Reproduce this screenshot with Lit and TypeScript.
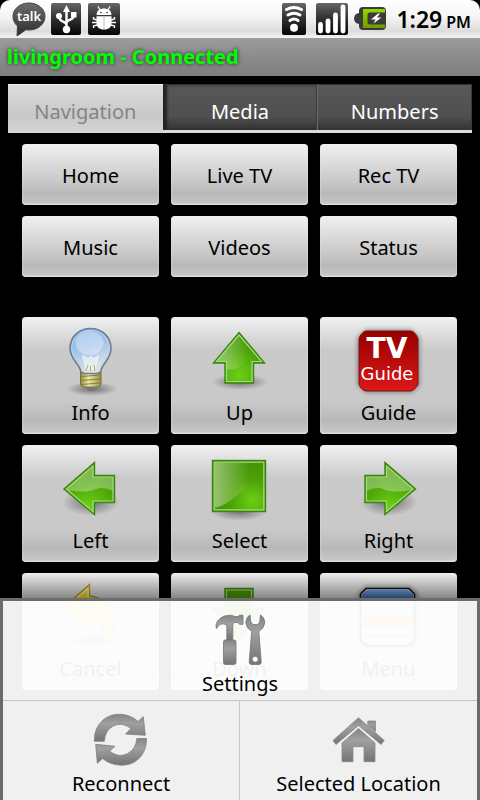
import { LitElement, html, css, svg, TemplateResult } from "lit";
import { customElement, state } from "lit/decorators.js";

type Key = { label: string; icon: TemplateResult };

const talkIcon = html`<svg class="glyph" width="36" height="38" viewBox="0 0 36 38" aria-hidden="true">
  <path d="M19 3C28 3 35 9 35 16.500S28 30 19 30L16 29.700 7 36 7.500 26C4.500 23.500 3 20 3 16.500 3 9 10 3 19 3Z" fill="url(#bubble)" stroke="#444" />
  <text x="19" y="21" class="talk" text-anchor="middle">talk</text>
</svg>`;

const usbIcon = html`<svg class="glyph" width="30" height="32" viewBox="0 0 30 32" aria-hidden="true">
  <rect width="30" height="32" rx="2" fill="url(#dark)" />
  <path d="M15.500 8V25M15.500 22C15.500 18 8 20 8 13M15.500 20C15.500 16 23 18 23 12" fill="none" stroke="#fff" stroke-width="2.400" />
  <path d="M15.500 2L19 9H12Z" fill="#fff" />
  <circle cx="8" cy="13" r="3" fill="#fff" />
  <rect x="20" y="9" width="5.500" height="5.500" fill="#fff" />
  <circle cx="15.500" cy="26.500" r="3.700" fill="#fff" />
</svg>`;

const bugIcon = html`<svg class="glyph" width="32" height="32" viewBox="0 0 32 32" aria-hidden="true">
  <rect width="32" height="32" rx="2" fill="url(#dark)" />
  <path d="M8.500 12C8.500 7.500 12 5.500 16 5.500S23.500 7.500 23.500 12Z" fill="#fff" />
  <path d="M8.500 13.200H23.500V20C23.500 24 21 26.500 16 26.500S8.500 24 8.500 20Z" fill="#fff" />
  <path d="M12 7L10 3.500M20 7L22 3.500M9 17L5.500 16V14M9 19.500H4M9 22L5.500 23V25M23 17L26.500 16V14M23 19.500H28M23 22L26.500 23V25" fill="none" stroke="#fff" stroke-width="1.400" />
  <path d="M16 13.500V26.500" stroke="#bbb" />
  <circle cx="13" cy="9.500" r=".8" fill="#333" /><circle cx="19" cy="9.500" r=".8" fill="#333" />
</svg>`;

const wifiIcon = html`<svg class="glyph" width="24" height="32" viewBox="0 0 24 32" aria-hidden="true">
  <rect width="24" height="32" rx="2" fill="url(#dark)" />
  <path d="M4.500 6.500Q12 2.500 19.500 6.500M6 12Q12 8.500 18 12M8 17.500Q12 14.500 16 17.500" fill="none" stroke="#fff" stroke-width="3" stroke-linecap="round" />
  <circle cx="12" cy="24.800" r="4" fill="#fff" />
</svg>`;

const signalIcon = html`<svg class="glyph" width="32" height="32" viewBox="0 0 32 32" aria-hidden="true">
  <rect width="32" height="32" rx="2" fill="url(#dark)" />
  <path d="M4.500 21.500V28M12 18V28M19.500 12V28M27 4V28" stroke="#fff" stroke-width="4.800" stroke-linecap="round" />
</svg>`;

const batteryIcon = html`<svg class="glyph" width="32" height="32" viewBox="0 0 32 32" aria-hidden="true">
  <path d="M9 4H28Q32 4 32 8V23Q32 27 28 27H9Q5 27 5 23V21L2 20Q0 18 0 15.500T2 11L5 10V8Q5 4 9 4Z" fill="#3a3a3a" />
  <path d="M9 6H31V25H9Z" fill="url(#charge)" />
  <path d="M16 9.500H32V21.500H16Q13.500 21.500 13.500 19V12Q13.500 9.500 16 9.500Z" fill="#3a3a3a" />
  <path d="M24 10.500L17 16.500H21.500L19.500 20.500 27.500 14.500H23L26 10.500Z" fill="#fff" />
</svg>`;

const padIcon = (body: TemplateResult) =>
  html`<svg class="pad-icon" width="72" height="72" viewBox="0 0 72 72" aria-hidden="true">${body}</svg>`;

const bulb = padIcon(svg`
  <ellipse cx="37" cy="64" rx="26" ry="7" fill="url(#shade)" />
  <path d="M25.500 46H46V59Q46 62 42 62H29.500Q25.500 62 25.500 59Z" fill="url(#brass)" stroke="#77733a" />
  <path d="M26 51.500L45.500 50M26 55.500L45.500 54M26 59.500L45 58" stroke="#85803e" fill="none" />
  <path d="M31 62H40L37.500 66H33.500Z" fill="#777" />
  <path d="M35.500 3.500C47 3.500 56 12 56 23.500 56 34 47.500 38 46 45.500Q45 48.500 41 48.500H30.500Q26.500 48.500 25.500 45.500C24 38 15 34 15 23.500 15 12 24 3.500 35.500 3.500Z" fill="url(#glass)" stroke="#747b8a" stroke-width="1.600" />
  <path d="M35.500 5.300C46 5.300 54.200 13 54.200 23.500 54.200 33 46 37 44.500 45M27 45C25.500 37 16.800 33 16.800 23.500 16.800 13 25 5.300 35.500 5.300" fill="none" stroke="#b7d3f3" />
  <ellipse cx="34.500" cy="18" rx="14" ry="12" fill="#fff" opacity=".35" />
  <path d="M31 45L27.500 30 33 33 36 31 39 33 43.500 30 40 45Z" fill="#fff" opacity=".5" />
  <path d="M32 46L27.500 31 33 34 36 32 39 34 43.500 31 39.500 46" fill="none" stroke="#eef4fa" />
  <path d="M31 46L33 40M40 46L39 40M35.500 46V41" stroke="#a7ad65" />`);

const upArrow = padIcon(svg`
  <ellipse cx="36" cy="57" rx="29" ry="8" fill="url(#shade)" />
  <path d="M35 7.500L60.500 38H49.500V58H21V38H9.500Z" fill="url(#green)" stroke="#3d8410" stroke-width="1.400" />
  <path d="M35 9.500L57 36Q46 34 38 40T23 44V36H13Z" fill="url(#sheen)" />
  <path d="M35 10L57.500 36.500H48V56.500H22.500V36.500H12.500Z" fill="none" stroke="#a2da7e" stroke-width="1.200" />`);

const leftBody = svg`
  <ellipse cx="36" cy="49" rx="29" ry="14" fill="url(#shade)" />
  <path d="M9 36L39.500 9.500V22.500H59.500V49.500H39.500V61.500Z" fill="url(#green)" stroke="#3d8410" stroke-width="1.400" />
  <path d="M12 36L38 13V24H58V38Q48 33 40 36.500T14 37.500Z" fill="#fff" opacity=".3" />
  <path d="M11.500 36L38 13V24H58V48H38V58.500Z" fill="none" stroke="#a2da7e" stroke-width="1.200" />`;

const guide = padIcon(svg`
  <path d="M13 4H58L67 12V60L59 68H13L4 60V12Z" fill="#000" class="soft" />
  <path d="M13 6H58Q60 6 62 8.500T65 14V59Q65 60 63 62.500T58 66H13Q11 66 8.500 63.500T6 58V14Q6 12 8.500 9T13 6Z" fill="url(#red)" stroke="#7c1212" />
  <text x="34" y="33" text-anchor="middle" class="tv">TV</text>
  <text x="34" y="55" text-anchor="middle" class="tv-guide">Guide</text>`);

const select = padIcon(svg`
  <ellipse cx="35" cy="58" rx="29" ry="10" fill="url(#shade)" />
  <rect x="8.500" y="7.500" width="53" height="51" fill="url(#greenbox)" stroke="#3d8410" stroke-width="1.400" />
  <path d="M11 10H60V30Q42 34 32 43T11 55Z" fill="url(#sheen)" />
  <rect x="10.200" y="9.200" width="49.600" height="47.600" fill="none" stroke="#a2da7e" stroke-width="1.200" />`);

const cancel = padIcon(svg`
  <ellipse cx="38" cy="60" rx="26" ry="6" fill="url(#shade)" />
  <path d="M9 26L34.500 3.500V15Q59 18 59 42 59 57 45.500 64.500 52 50 46 42 42 37 34.500 37V49Z" fill="#ecd23c" stroke="#b1932a" stroke-width="1.400" />
  <path d="M12 26L33 7.500V17Q57 20 57 42" fill="none" stroke="#fbee9a" stroke-width="1.200" />`);

const down = padIcon(svg`
  <path d="M21 7.500H49V27.500H60.500L35 58 9.500 27.500H21Z" fill="url(#green)" stroke="#3d8410" stroke-width="1.400" />
  <path d="M22.500 9H47.500V29H57.500L35 55.500 12.500 29H22.500Z" fill="none" stroke="#a2da7e" stroke-width="1.200" />`);

const menuIcon = padIcon(svg`
  <path d="M13 5H57L65 12V60L58 67H12L5 60V12Z" class="soft" />
  <path d="M13 7.500H56L61.500 13V59L56 64.500H13L7.500 59V13Z" fill="#ddd" stroke="#111" stroke-width="1.600" />
  <path d="M13.500 8.500H55.500L60.500 13.500V18H8.500V13.500Z" fill="url(#blue)" />
  <rect x="8.500" y="36" width="52" height="9.500" fill="#f3b93c" />
  <path d="M8 18H61M8 27H61M8 36H61M8 46H61M8 55H61" stroke="#777" />`);

const menuGlyph = (body: TemplateResult) =>
  html`<svg class="menu-icon" width="56" height="56" viewBox="0 0 56 56" aria-hidden="true">${body}</svg>`;

const toolsIcon = menuGlyph(svg`
  <g fill="url(#steel)" stroke="#747474" stroke-width=".8">
    <path d="M4.500 16.500Q2.500 11 8 6.500 12 3 19 3.200L23 4.500 26 4.500 27.500 3.200H31V12.300H27.500L26 10.500H22L20.800 12V28H14.800V13Q8 9.500 4.500 16.500Z" />
    <path d="M13 28H22.500Q24 28 24 30V50.500Q24 52.500 22 52.500H13.500Q11.500 52.500 11.500 50.500V30Q11.500 28 13 28Z" />
    <path fill-rule="evenodd" d="M38 2.800Q34 5.500 33.800 10.500 34 16 39.700 19.500L37.200 50Q37.200 52.500 39.500 52.500H47Q49.300 52.500 49.200 50L46.800 19.500Q52.500 16 52.800 10.500 52.500 5.500 48.500 2.800L47.700 10 45.500 12.500H41L38.800 10ZM43.200 44.200A3 3 0 1 1 43.200 50.200 3 3 0 1 1 43.200 44.200Z" />
  </g>`);

const reconnectIcon = menuGlyph(svg`
  <g fill="url(#steel)" stroke="#808080" stroke-width=".8">
    <path d="M1.300 29.300Q1 16 10 8 18 1.500 28 2.300 38 3 45 9.500L50.300 4.700 52.300 23.300 32.500 22 38 16.500Q29 9.500 20 14 12 18.500 11.300 29.300Z" />
    <path d="M53.500 26.500Q53.800 39 45.500 47 38 53.500 28 53.200 17.500 53 9.500 46.500L4.300 51.300 2.700 32.300 22 34.300 16.500 39Q25 46 34 42 43 37.500 43.800 26.500Z" />
  </g>`);

const homeIcon = menuGlyph(svg`
  <g fill="url(#steel)" stroke="#8a8a8a" stroke-width=".8">
    <path d="M36.800 9H44.500V19.500L36.800 13Z" />
    <path d="M27.500 5.700L53.300 28.500 50 32.500 27.500 13.500 5 32.500 2 28.500Z" />
    <path d="M27.500 16.500L44 31V49.700H33V34.700H22V49.700H11V31Z" />
  </g>`);

@customElement("app-root")
export class AppRoot extends LitElement {
  @state() private tab = "Navigation";

  private tabs = ["Navigation", "Media", "Numbers"];
  private shortcuts = ["Home", "Live TV", "Rec TV", "Music", "Videos", "Status"];
  private keys: Key[] = [
    { label: "Info", icon: bulb },
    { label: "Up", icon: upArrow },
    { label: "Guide", icon: guide },
    { label: "Left", icon: padIcon(leftBody) },
    { label: "Select", icon: select },
    { label: "Right", icon: padIcon(svg`<g transform="matrix(-1 0 0 1 71.500 0)">${leftBody}</g>`) },
    { label: "Cancel", icon: cancel },
    { label: "Down", icon: down },
    { label: "Menu", icon: menuIcon },
  ];

  static styles = css`
    :host {
      display: block;
      position: relative;
      min-height: 100vh;
      background: #000;
      color: #000;
      font-family: "Noto Sans", "Open Sans", sans-serif;
      font-size: 20px;
      line-height: 28px;
      overflow: hidden;
    }
    * { box-sizing: border-box; }
    button {
      margin: 0;
      padding: 0;
      border: 0;
      background: none;
      color: inherit;
      font: inherit;
      cursor: pointer;
    }
    svg { display: block; }
    .defs { position: absolute; width: 0; height: 0; }
    .status {
      display: flex;
      justify-content: space-between;
      height: 38px;
      padding: 0 9px 0 10px;
      border-radius: 10px 10px 0 0;
      background: linear-gradient(#fff, #f4f4f4 45%, #dcdcdc 82%, #f4f4f4);
    }
    .group { display: flex; align-items: flex-start; padding-top: 3px; }
    .notices { gap: 7px; }
    .notices .glyph:first-child { margin: -3px -2px 0 0; }
    .radios { gap: 10px; }
    .radios .glyph:nth-child(3) { margin-left: -4px; }
    .talk { font: 600 13px "Noto Sans", sans-serif; fill: #fff; }
    .clock { display: flex; align-items: baseline; gap: 4px; font-weight: 600; font-size: 23px; line-height: 32px; }
    .clock small { font-size: 16px; }
    .title {
      margin: 0;
      height: 38px;
      padding: 0 7px;
      background: linear-gradient(#9b9b9b, #7d7d7d);
      color: #0f0;
      font-size: 20px;
      line-height: 38px;
      font-weight: 700;
      text-shadow: 0 0 4px #222;
    }
    .tabs {
      display: grid;
      grid-template-columns: repeat(3, 1fr);
      margin: 8px 8px 11px;
      height: 49px;
      border-bottom: 3px solid #dadcda;
    }
    .tab {
      padding-top: 9px;
      background: linear-gradient(#585858, #4f4f4f 70%, #333);
      border-top: 1px solid #333;
      border-left: 1px solid #6c6c6c;
      border-right: 1px solid #3a3a3a;
      color: #fff;
    }
    .tab.active {
      margin-bottom: -3px;
      padding-bottom: 3px;
      border: 0;
      border-top: 1px solid #eee;
      background: linear-gradient(#dcdcdc, #c8c8c8 65%, #d5d5d5);
      color: #858585;
    }
    .tab.active + .tab { box-shadow: inset 3px 0 3px #222; border-left-color: #222; }
    .grid {
      display: grid;
      grid-template-columns: repeat(3, 1fr);
      gap: 11px 12px;
      padding: 0 23px 0 22px;
    }
    .grid + .grid { margin-top: 40px; }
    .key {
      border-radius: 4px;
      box-shadow: inset 0 -1px 2px #e8e8e8;
      background: linear-gradient(#f1f1f1, #d6d6d6 40%, #c8c8c8 62%, #b8b8b8 80%, #c6c6c6);
    }
    .shortcut { height: 61px; padding-top: 2px; }
    .pad {
      display: flex;
      flex-direction: column;
      align-items: center;
      gap: 2px;
      height: 117px;
      padding-top: 8px;
      background: linear-gradient(#f1f1f1, #cacaca 28%, #c9c9c9 72%, #b8b8b8 88%, #cacaca);
    }
    .soft { filter: blur(2px); opacity: .3; }
    .tv { font: bold 28px "DejaVu Sans", sans-serif; fill: #fff; }
    .tv-guide { font: 18px "DejaVu Sans", sans-serif; fill: #fff; }
    .options {
      position: absolute;
      left: 0;
      right: 0;
      bottom: 0;
      display: grid;
      grid-template-columns: 1fr 1fr;
      border: solid #6b6b6b;
      border-width: 3px 3px 0;
      background: rgba(255, 255, 255, .94);
      background-clip: padding-box;
    }
    .options::before {
      content: "";
      position: absolute;
      left: -3px;
      right: -3px;
      bottom: calc(100% + 3px);
      height: 25px;
      background: linear-gradient(transparent, rgba(0, 0, 0, .36));
    }
    .option {
      display: flex;
      flex-direction: column;
      align-items: center;
      gap: 2px;
      padding: 11px 0 2px;
    }
    .option:first-of-type {
      grid-column: 1 / -1;
      border-bottom: 1px solid #c6c6c6;
    }
    .option:nth-of-type(2) { border-right: 1px solid #c6c6c6; }
  `;

  render() {
    return html`
      <svg class="defs" aria-hidden="true">
        <defs>
          <linearGradient id="dark" x2="0" y2="1"><stop stop-color="#666" /><stop offset=".45" stop-color="#333" /><stop offset="1" stop-color="#050505" /></linearGradient>
          <linearGradient id="bubble" x2="0" y2="1"><stop stop-color="#6c6c6c" /><stop offset="1" stop-color="#2c2c2c" /></linearGradient>
          <linearGradient id="charge" x2="0" y2="1"><stop stop-color="#97d600" /><stop offset="1" stop-color="#6f9c00" /></linearGradient>
          <radialGradient id="shade"><stop stop-color="#000" stop-opacity=".45" /><stop offset="1" stop-color="#000" stop-opacity="0" /></radialGradient>
          <radialGradient id="green" cy=".85" r=".8"><stop stop-color="#6bd016" /><stop offset=".6" stop-color="#4ea408" /><stop offset="1" stop-color="#479506" /></radialGradient>
          <radialGradient id="greenbox" cx=".75" cy=".78" r=".7"><stop stop-color="#6bd016" /><stop offset=".6" stop-color="#4da007" /><stop offset="1" stop-color="#479506" /></radialGradient>
          <linearGradient id="sheen"><stop stop-color="#fff" stop-opacity=".42" /><stop offset=".7" stop-color="#fff" stop-opacity="0" /></linearGradient>
          <linearGradient id="brass"><stop stop-color="#8f8b48" /><stop offset=".4" stop-color="#f0eda9" /><stop offset="1" stop-color="#918c45" /></linearGradient>
          <linearGradient id="glass" x2=".3" y2="1"><stop stop-color="#7faee4" /><stop offset=".5" stop-color="#a0c3ec" /><stop offset="1" stop-color="#dfe3e0" /></linearGradient>
          <linearGradient id="red" x2="0" y2="1"><stop stop-color="#960000" /><stop offset="1" stop-color="#dc1818" /></linearGradient>
          <linearGradient id="blue" x2="0" y2="1"><stop stop-color="#7ba5dc" /><stop offset="1" stop-color="#3465a4" /></linearGradient>
          <linearGradient id="steel" x2="0" y2="1"><stop stop-color="#858585" /><stop offset=".35" stop-color="#a0a0a0" /><stop offset="1" stop-color="#747474" /></linearGradient>
        </defs>
      </svg>
      <header>
        <div class="status">
          <div class="group notices">${talkIcon}${usbIcon}${bugIcon}</div>
          <div class="group radios">
            ${wifiIcon}${signalIcon}${batteryIcon}
            <time class="clock">1:29 <small>PM</small></time>
          </div>
        </div>
        <h1 class="title">livingroom - Connected</h1>
      </header>
      <main>
        <div class="tabs" role="tablist">
          ${this.tabs.map(
            (name) => html`<button
              class="tab ${name === this.tab ? "active" : ""}"
              role="tab"
              aria-selected=${name === this.tab ? "true" : "false"}
              @click=${() => (this.tab = name)}
            >${name}</button>`
          )}
        </div>
        <div class="grid">
          ${this.shortcuts.map((name) => html`<button class="key shortcut">${name}</button>`)}
        </div>
        <div class="grid">
          ${this.keys.map((key) => html`<button class="key pad">${key.icon}<span>${key.label}</span></button>`)}
        </div>
      </main>
      <nav class="options" aria-label="Options">
        <button class="option">${toolsIcon}<span>Settings</span></button>
        <button class="option">${reconnectIcon}<span>Reconnect</span></button>
        <button class="option">${homeIcon}<span>Selected Location</span></button>
      </nav>
    `;
  }
}
